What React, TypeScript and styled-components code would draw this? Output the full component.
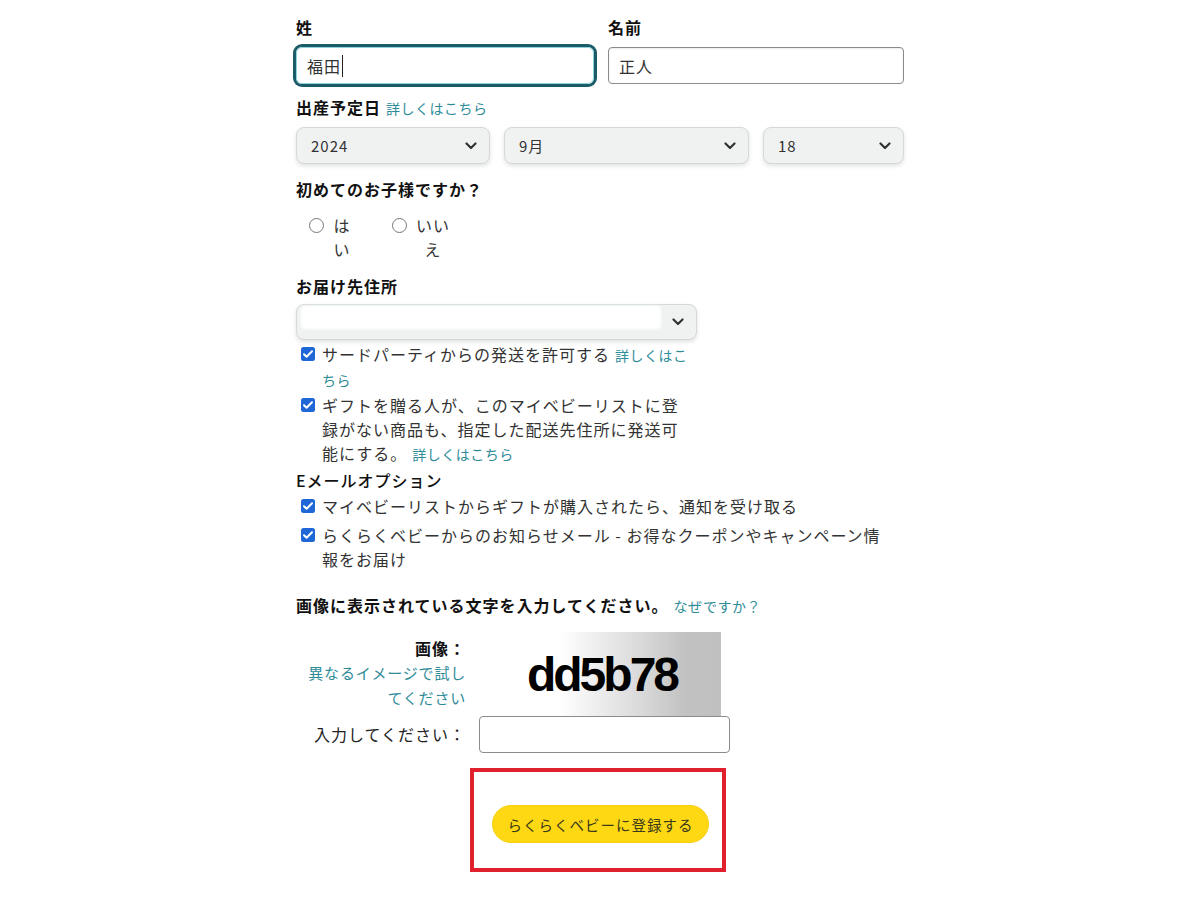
import styled, { createGlobalStyle } from 'styled-components';

const GlobalStyle = createGlobalStyle`
  body {
    margin: 0;
    background: #fff;
    font-family: "Noto Sans CJK JP", "Noto Sans", sans-serif;
    font-size: 16px;
    letter-spacing: 1px;
    color: #333;
  }
`;

const Page = styled.div`
  width: 608px;
  margin: 0 auto;
  padding-top: 15px;
  padding-bottom: 30px;
`;

const Label = styled.div<{ $gap?: number }>`
  font-weight: 700;
  color: #111;
  line-height: 24px;
  margin-top: ${(p) => p.$gap ?? 0}px;
`;

const Link = styled.a`
  font-weight: 400;
  font-size: 14px;
  letter-spacing: 0.5px;
  color: #2e8b98;
  text-decoration: none;
  padding-left: 5px;
`;

const NameRow = styled.div`
  display: grid;
  grid-template-columns: 298px 296px;
  gap: 14px;
`;

const Field = styled.div`
  display: flex;
  flex-direction: column;
  gap: 8px;
`;

const TextBox = styled.div<{ $focused?: boolean }>`
  height: 37px;
  box-sizing: border-box;
  display: flex;
  align-items: center;
  padding: 0 10px;
  border: 1px solid ${(p) => (p.$focused ? '#8fd3d9' : '#8a8d8d')};
  border-radius: ${(p) => (p.$focused ? 6 : 4)}px;
  box-shadow: ${(p) => (p.$focused ? '0 0 0 3px #1b5c68' : 'inset 0 1px 2px rgba(0,0,0,.08)')};
  color: #333;
`;

const Caret = styled.span`
  width: 1px;
  height: 22px;
  background: #222;
  margin-left: 1px;
`;

const DateRow = styled.div`
  display: flex;
  gap: 14px;
  margin-top: 7px;
`;

const Select = styled.div<{ $width: number; $height?: number }>`
  width: ${(p) => p.$width}px;
  height: ${(p) => p.$height ?? 37}px;
  box-sizing: border-box;
  display: flex;
  align-items: center;
  justify-content: space-between;
  padding: 0 12px 0 14px;
  background: #f0f2f2;
  border: 1px solid #d5d9d9;
  border-radius: 8px;
  box-shadow: 0 2px 4px rgba(15, 17, 17, 0.12);
  font-size: 15px;
  color: #333;
`;

const Redacted = styled.span`
  width: 356px;
  height: 19px;
  margin-left: -8px;
  align-self: flex-start;
  margin-top: 3px;
  background: #fff;
  border-radius: 2px;
  box-shadow: 0 0 3px 2px #fff;
`;

const Chevron = () => (
  <svg width="12" height="8" viewBox="0 0 12 8">
    <path d="M1.5 1.5l4.5 4.5 4.5-4.5" fill="none" stroke="#333" strokeWidth="2.2" strokeLinecap="round" strokeLinejoin="round" />
  </svg>
);

const RadioGroup = styled.div`
  display: flex;
  padding-left: 13px;
  margin-top: 12px;
`;

const RadioItem = styled.label<{ $space: number }>`
  display: flex;
  align-items: flex-start;
  gap: 8px;
  margin-right: ${(p) => p.$space}px;
  line-height: 24px;
`;

const RadioCircle = styled.span`
  width: 15px;
  height: 15px;
  box-sizing: border-box;
  margin-top: 5px;
  border: 1px solid #777;
  border-radius: 50%;
  background: #fff;
`;

const RadioText = styled.span<{ $width: number }>`
  width: ${(p) => p.$width}px;
  text-align: center;
`;

const CheckList = styled.div<{ $gap: number }>`
  display: flex;
  flex-direction: column;
  gap: ${(p) => p.$gap}px;
  margin-top: 2px;
`;

const CheckRow = styled.div<{ $textWidth: number }>`
  display: flex;
  align-items: flex-start;
  gap: 7px;
  padding-left: 5px;
  line-height: 24px;

  & > span {
    width: ${(p) => p.$textWidth}px;
  }
`;

const Box = styled.svg`
  flex: none;
  margin-top: 5px;
`;

const CheckBox = () => (
  <Box width="14" height="14" viewBox="0 0 14 14">
    <rect x="0" y="0" width="14" height="14" rx="2.5" fill="#1f66d6" />
    <path d="M3 7.2l2.6 2.6L11 4.3" fill="none" stroke="#fff" strokeWidth="2" strokeLinecap="round" strokeLinejoin="round" />
  </Box>
);

const OptionTitle = styled.div`
  line-height: 24px;
  color: #111;
  font-weight: 500;
  margin-top: 2px;
`;

const CaptchaGrid = styled.div`
  display: grid;
  grid-template-columns: 170px 251px;
  column-gap: 13px;
  margin-top: 14px;
`;

const SideText = styled.div<{ $pad?: number }>`
  text-align: right;
  line-height: 24px;
  padding-top: ${(p) => p.$pad ?? 0}px;
  color: #222;

  b {
    display: block;
    font-weight: 700;
    color: #111;
  }

  a {
    font-size: 15px;
    letter-spacing: 0.8px;
    color: #2e8b98;
    text-decoration: none;
  }
`;

const CaptchaImage = styled.div`
  width: 242px;
  height: 84px;
  display: flex;
  align-items: center;
  justify-content: center;
  padding-left: 4px;
  box-sizing: border-box;
  background: linear-gradient(to right, #fff 0%, #fff 33%, #d8d8d8 68%, #c2c2c2 85%, #c0c0c0 100%);
  font-family: "Liberation Sans", Arial, sans-serif;
  font-weight: 700;
  font-size: 48px;
  letter-spacing: -3px;
  color: #000;
`;

const CodeInput = styled.div`
  height: 37px;
  box-sizing: border-box;
  border: 1px solid #8a8d8d;
  border-radius: 4px;
`;

const Highlight = styled.div`
  width: 256px;
  height: 104px;
  box-sizing: border-box;
  margin: 15px 0 0 174px;
  border: 4px solid #e0202c;
  padding: 33px 0 0 18px;
`;

const SubmitButton = styled.button`
  width: 217px;
  height: 38px;
  border: 1px solid #f7cf10;
  border-radius: 19px;
  background: #ffd814;
  font-family: "Noto Sans CJK JP", sans-serif;
  font-size: 14.5px;
  letter-spacing: 1px;
  color: #3a3a1a;
  padding: 0;
`;

export default function App() {
  return (
    <>
      <GlobalStyle />
      <Page>
        <NameRow>
          <Field>
            <Label>姓</Label>
            <TextBox $focused>
              福田
              <Caret />
            </TextBox>
          </Field>
          <Field>
            <Label>名前</Label>
            <TextBox>正人</TextBox>
          </Field>
        </NameRow>

        <Label $gap={11}>
          出産予定日<Link href="#">詳しくはこちら</Link>
        </Label>
        <DateRow>
          <Select $width={194}>
            2024
            <Chevron />
          </Select>
          <Select $width={245}>
            9月
            <Chevron />
          </Select>
          <Select $width={141}>
            18
            <Chevron />
          </Select>
        </DateRow>

        <Label $gap={13}>初めてのお子様ですか？</Label>
        <RadioGroup>
          <RadioItem $space={40}>
            <RadioCircle />
            <RadioText $width={20}>はい</RadioText>
          </RadioItem>
          <RadioItem $space={0}>
            <RadioCircle />
            <RadioText $width={36}>いいえ</RadioText>
          </RadioItem>
        </RadioGroup>

        <Label $gap={13}>お届け先住所</Label>
        <Select $width={401} $height={36} style={{ marginTop: 6 }}>
          <Redacted />
          <Chevron />
        </Select>
        <CheckList $gap={1}>
          <CheckRow $textWidth={370}>
            <CheckBox />
            <span>
              サードパーティからの発送を許可する<Link href="#">詳しくはこちら</Link>
            </span>
          </CheckRow>
          <CheckRow $textWidth={370}>
            <CheckBox />
            <span>
              ギフトを贈る人が、このマイベビーリストに登録がない商品も、指定した配送先住所に発送可能にする。
              <Link href="#">詳しくはこちら</Link>
            </span>
          </CheckRow>
        </CheckList>

        <OptionTitle>Eメールオプション</OptionTitle>
        <CheckList $gap={5}>
          <CheckRow $textWidth={568}>
            <CheckBox />
            <span>マイベビーリストからギフトが購入されたら、通知を受け取る</span>
          </CheckRow>
          <CheckRow $textWidth={568}>
            <CheckBox />
            <span>らくらくベビーからのお知らせメール - お得なクーポンやキャンペーン情報をお届け</span>
          </CheckRow>
        </CheckList>

        <Label $gap={22}>
          画像に表示されている文字を入力してください。<Link href="#">なぜですか？</Link>
        </Label>
        <CaptchaGrid>
          <SideText $pad={4}>
            <b>画像：</b>
            <a href="#">異なるイメージで試してください</a>
          </SideText>
          <CaptchaImage>dd5b78</CaptchaImage>
          <SideText $pad={6}>入力してください：</SideText>
          <CodeInput />
        </CaptchaGrid>

        <Highlight>
          <SubmitButton>らくらくベビーに登録する</SubmitButton>
        </Highlight>
      </Page>
    </>
  );
}
